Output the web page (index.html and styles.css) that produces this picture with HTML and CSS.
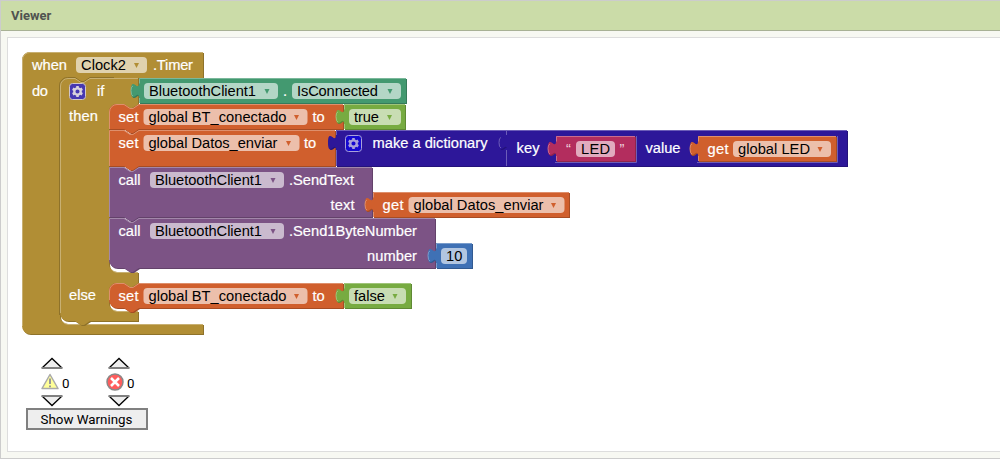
FILE: index.html
```html
<!DOCTYPE html>
<html lang="es">
<head>
<meta charset="utf-8">
<title>Viewer</title>
<link rel="stylesheet" href="styles.css">
</head>
<body>
<main class="viewer">
<header class="viewer-header">Viewer</header>
<section class="workspace">
<svg class="canvas" viewBox="8 38 992 413" width="992" height="413">
<defs>
<path id="s-when" d="M22 60a8 8 0 0 1 8-8H203V78H90l-6 4h-3l-6-4h-7a8 8 0 0 0-8 8V316a8 8 0 0 0 8 8H203V334H30a8 8 0 0 1-8-8z"/>
<path id="s-if" d="M60 86a8 8 0 0 1 8-8H75l6 4h3l6-4H138V104h1l-7 4h-3l-6-4h-6a8 8 0 0 0-8 8V264a8 8 0 0 0 8 8H138V283h1l-7 4h-3l-6-4h-6a8 8 0 0 0-8 8V303a8 8 0 0 0 8 8H138V321H90l-6 4h-3l-6-4h-7a8 8 0 0 1-8-8z"/>
<path id="s-set1" d="M109 112a8 8 0 0 1 8-8H124l6 4h3l6-4H343V129H139l-6 4h-3l-6-4H109z"/>
<path id="s-set2" d="M109 130H124l6 4h3l6-4H335V166H139l-6 4h-3l-6-4H109z"/>
<path id="s-call1" d="M109 167H124l6 4h3l6-4H372V217H139l-6 4h-3l-6-4H109z"/>
<path id="s-call2" d="M109 218H124l6 4h3l6-4H435V268H139l-6 4h-3l-6-4H117a8 8 0 0 1-8-8z"/>
<path id="s-set3" d="M109 291a8 8 0 0 1 8-8H124l6 4h3l6-4H343V308H139l-6 4h-3l-6-4H117a8 8 0 0 1-8-8z"/>
<path id="s-conn" d="M139 78H406V103H139V98c0-10-8 8-8-7.500s8 2.500 8-7.500z"/>
<path id="s-true" d="M344 104H405V129H344V124c0-10-8 8-8-7.500s8 2.500 8-7.500z"/>
<path id="s-false" d="M344 283H411V308H344V303c0-10-8 8-8-7.500s8 2.500 8-7.500z"/>
<path id="s-dict" d="M336 130H507V166H336V150c0-10-8 8-8-7.500s8 2.500 8-7.500z"/>
<path id="s-pair" d="M507 130H847V166H507V150c0-10-8 8-8-7.500s8 2.500 8-7.500z"/>
<path id="s-led" d="M556 136H635V161H556V156c0-10-8 8-8-7.500s8 2.500 8-7.500z"/>
<path id="s-getled" d="M698 136H836V161H698V156c0-10-8 8-8-7.500s8 2.500 8-7.500z"/>
<path id="s-getdatos" d="M373 192H569V217H373V212c0-10-8 8-8-7.500s8 2.500 8-7.500z"/>
<path id="s-ten" d="M436 243H472V268H436V263c0-10-8 8-8-7.500s8 2.500 8-7.500z"/>
<path id="arrow" d="M-2.500-2H2.500L0 3z"/>
<g id="gear">
<rect class="gear-box" x=".5" y=".5" width="16" height="16" rx="3"/>
<circle class="gear-ring" cx="8.500" cy="8.500" r="3.200"/>
<path class="gear-teeth" d="M8.500 3V5M8.500 12V14M3.740 5.750L5.470 6.750M11.530 10.250L13.260 11.250M3.740 11.250L5.470 10.250M11.530 6.750L13.260 5.750"/>
</g>
</defs>

<g class="block gold">
<use class="dark" href="#s-when" x="1" y="1"/><use class="main" href="#s-when"/>
<path class="light" d="M22.500 326V60a7.500 7.500 0 0 1 7.500-7.500H203M62.500 321.500a8 8 0 0 0 5.500 3H203"/>
<text x="32" y="70" textLength="35">when</text>
<rect class="field" x="76" y="57" width="71" height="16" rx="4"/><text class="value" x="81" y="70" textLength="45">Clock2</text><use class="arrow" href="#arrow" x="136.500" y="65"/>
<text x="153" y="70" textLength="40">.Timer</text>
<text x="32" y="95.500" textLength="16">do</text>
</g>

<g class="block gold">
<use class="dark" href="#s-if" x="1" y="1"/><use class="main" href="#s-if"/>
<path class="edge" d="M59.500 315V86a8 8 0 0 1 8-8.500H75l6 4h3l6-4H114"/>
<path class="light" d="M60.500 313V86a7.500 7.500 0 0 1 7.500-7.500H75l6 4h3l6-4H138M111.500 269.500a8 8 0 0 0 5.500 3H138M111.500 308.500a8 8 0 0 0 5.500 3H138"/>
<use href="#gear" x="69" y="83"/>
<text x="97" y="96">if</text><text x="69" y="121" textLength="29">then</text><text x="69" y="300" textLength="27">else</text>
</g>

<g class="block green">
<use class="dark" href="#s-conn" x="1" y="1"/><use class="main" href="#s-conn"/>
<path class="light" d="M406 78.500H139.500V83.500M133 86q-2 0-2 4.500q0 5 2 5.500M139.500 98V103"/>
<rect class="field" x="144" y="83" width="134" height="16" rx="4"/><text class="value" x="149" y="96" textLength="107">BluetoothClient1</text><use class="arrow" href="#arrow" x="267" y="91"/>
<text x="283" y="96">.</text>
<rect class="field" x="292" y="83" width="109" height="16" rx="4"/><text class="value" x="297" y="96" textLength="81">IsConnected</text><use class="arrow" href="#arrow" x="390" y="91"/>
</g>

<g class="block orange">
<use class="dark" href="#s-set1" x="1" y="1"/><use class="main" href="#s-set1"/>
<path class="light" d="M109.500 129V112a7.500 7.500 0 0 1 7.500-7.500H124l6 4h3l6-4H343"/>
<text x="118.500" y="122" textLength="20">set</text>
<rect class="field" x="143.500" y="109" width="164" height="16" rx="4"/><text class="value" x="148.500" y="122" textLength="138">global BT_conectado</text><use class="arrow" href="#arrow" x="296.500" y="117"/>
<text x="312.500" y="122">to</text>
</g>
<g class="block lime">
<use class="dark" href="#s-true" x="1" y="1"/><use class="main" href="#s-true"/>
<path class="light" d="M405 104.500H344.500V109.500M338 112q-2 0-2 4.500q0 5 2 5.500M344.500 124V129"/>
<rect class="field" x="349" y="109" width="52" height="16" rx="4"/><text class="value" x="354" y="122" textLength="25">true</text><use class="arrow" href="#arrow" x="389.500" y="117"/>
</g>

<g class="block orange">
<use class="dark" href="#s-set2" x="1" y="1"/><use class="main" href="#s-set2"/>
<path class="light" d="M109.500 166V130.500H124l6 4h3l6-4H335"/>
<text x="118.500" y="148" textLength="20">set</text>
<rect class="field" x="143.500" y="135" width="156" height="16" rx="4"/><text class="value" x="148.500" y="148" textLength="129">global Datos_enviar</text><use class="arrow" href="#arrow" x="288.500" y="143"/>
<text x="304" y="148">to</text>
</g>
<g class="block navy">
<use class="dark" href="#s-dict" x="1" y="1"/><use class="main" href="#s-dict"/>
<path class="light" d="M507 130.500H336.500V135M336.500 150V166"/>
<use class="bright" href="#gear" x="345" y="135"/>
<text x="372.500" y="148" textLength="115">make a dictionary</text>
</g>
<g class="block navy">
<use class="dark" href="#s-pair" x="1" y="1"/><use class="main" href="#s-pair"/>
<path class="light" d="M847 130.500H506.500V135M501 137.500q-2 0-2 5q0 5 2 5.500M506.500 150V166M555 162.500H636.500V136M697 162.500H837.500V136"/>
<text x="516.500" y="153" textLength="23">key</text><text x="645.500" y="153" textLength="35">value</text>
</g>
<g class="block pink">
<use class="dark" href="#s-led" x="1" y="1"/><use class="main" href="#s-led"/>
<path class="light" d="M635 136.500H556.500V141.500M550 144q-2 0-2 4.500q0 5 2 5.500M556.500 156V161"/>
<text class="quote" x="566" y="154">“</text><rect class="field" x="576" y="141" width="39" height="16" rx="4"/><text class="value" x="581" y="154" textLength="29">LED</text><text class="quote" x="619.500" y="154">”</text>
</g>
<g class="block orange">
<use class="dark" href="#s-getled" x="1" y="1"/><use class="main" href="#s-getled"/>
<path class="light" d="M836 136.500H698.500V141.500M692 144q-2 0-2 4.500q0 5 2 5.500M698.500 156V161"/>
<text x="707.500" y="154" textLength="21">get</text><rect class="field" x="733" y="141" width="98" height="16" rx="4"/><text class="value" x="738" y="154" textLength="72">global LED</text><use class="arrow" href="#arrow" x="820" y="149"/>
</g>

<g class="block purple">
<use class="dark" href="#s-call1" x="1" y="1"/><use class="main" href="#s-call1"/>
<path class="light" d="M109.500 217V167.500H124l6 4h3l6-4H372"/>
<text x="118.500" y="185" textLength="22">call</text>
<rect class="field" x="150" y="172" width="134" height="16" rx="4"/><text class="value" x="155" y="185" textLength="107">BluetoothClient1</text><use class="arrow" href="#arrow" x="273" y="180"/>
<text x="289" y="185" textLength="65">.SendText</text><text x="330.500" y="210" textLength="24">text</text>
</g>
<g class="block orange">
<use class="dark" href="#s-getdatos" x="1" y="1"/><use class="main" href="#s-getdatos"/>
<path class="light" d="M569 192.500H373.500V197.500M367 200q-2 0-2 4.500q0 5 2 5.500M373.500 212V217"/>
<text x="382.500" y="210" textLength="21">get</text><rect class="field" x="408.500" y="197" width="156" height="16" rx="4"/><text class="value" x="413.500" y="210" textLength="130">global Datos_enviar</text><use class="arrow" href="#arrow" x="553.500" y="205"/>
</g>

<g class="block purple">
<use class="dark" href="#s-call2" x="1" y="1"/><use class="main" href="#s-call2"/>
<path class="light" d="M109.500 260V218.500H124l6 4h3l6-4H435"/>
<text x="118.500" y="236" textLength="22">call</text>
<rect class="field" x="150" y="223" width="134" height="16" rx="4"/><text class="value" x="155" y="236" textLength="107">BluetoothClient1</text><use class="arrow" href="#arrow" x="273" y="231"/>
<text x="289" y="236" textLength="128">.Send1ByteNumber</text><text x="367" y="261" textLength="50">number</text>
</g>
<g class="block blue">
<use class="dark" href="#s-ten" x="1" y="1"/><use class="main" href="#s-ten"/>
<path class="light" d="M472 243.500H436.500V248.500M430 251q-2 0-2 4.500q0 5 2 5.500M436.500 263V268"/>
<rect class="field" x="441" y="248" width="26" height="16" rx="4"/><text class="value" x="446" y="261">10</text>
</g>

<g class="block orange">
<use class="dark" href="#s-set3" x="1" y="1"/><use class="main" href="#s-set3"/>
<path class="light" d="M109.500 300V291a7.500 7.500 0 0 1 7.500-7.500H124l6 4h3l6-4H343"/>
<text x="118.500" y="301" textLength="20">set</text>
<rect class="field" x="143.500" y="288" width="164" height="16" rx="4"/><text class="value" x="148.500" y="301" textLength="138">global BT_conectado</text><use class="arrow" href="#arrow" x="296.500" y="296"/>
<text x="312.500" y="301">to</text>
</g>
<g class="block lime">
<use class="dark" href="#s-false" x="1" y="1"/><use class="main" href="#s-false"/>
<path class="light" d="M411 283.500H344.500V288.500M338 291q-2 0-2 4.500q0 5 2 5.500M344.500 303V308"/>
<rect class="field" x="349" y="288" width="57" height="16" rx="4"/><text class="value" x="354" y="301" textLength="31">false</text><use class="arrow" href="#arrow" x="395" y="296"/>
</g>

<g class="indicator">
<g class="nav">
<path d="M42 368L52 358.500L62 368"/><path d="M109 368L119 358.500L129 368"/>
<path d="M42 396L52 405.500L62 396"/><path d="M109 396L119 405.500L129 396"/>
</g>
<path class="nav-base" d="M41.500 368H62.500M108.500 368H129.500M41.500 396H62.500M108.500 396H129.500"/>
<path class="warn" d="M50 374.500L58 388.500H42z"/><path class="warn-mark" d="M50 378.500V384M50 385.500V387.200"/>
<circle class="error" cx="115" cy="382" r="8"/><path class="error-mark" d="M111 378L119 386M119 378L111 386"/>
<text x="62" y="388">0</text><text x="127" y="388">0</text>
<rect class="button" x="27" y="409" width="120" height="20"/>
<text x="40.500" y="424" textLength="92">Show Warnings</text>
</g>
</svg>
</section>
</main>
</body>
</html>
```
FILE: styles.css
```css
* { box-sizing: border-box; }
body { margin: 0; overflow: hidden; background: #fff; }
.viewer {
  display: flex;
  flex-direction: column;
  height: 459px;
  border: 1px solid #ccc;
  border-right: 0;
  background: #f7f8f2;
}
.viewer-header {
  height: 30px;
  padding-left: 10px;
  border-bottom: 1px solid #a8b195;
  background: #cbdca8;
  color: #505350;
  font: bold 13px/29px Roboto, sans-serif;
}
.workspace {
  flex: 1;
  margin: 6px 0 6px 6px;
  border: 1px solid #ddd;
  border-right: 0;
  background: #fff;
}
.canvas { display: block; }
.block text { fill: #fff; font: 14.670px "Liberation Sans", Arial, sans-serif; stroke: #fff; stroke-width: .2px; }
.block .value { fill: #000; stroke: none; }
.block .quote { stroke: none; fill: #f0d5df; }
.main, .arrow { fill: var(--main); }
.dark { fill: var(--dark); }
.light { fill: none; stroke: var(--light); }
.edge { fill: none; stroke: var(--dark); }
.field { fill: #fff; fill-opacity: .6; }
.gold { --main: #b18e35; --dark: #8e722a; --light: #c8b072; }
.green { --main: #439970; --dark: #367a5a; --light: #7bb89b; }
.orange { --main: #d05f2d; --dark: #a64c24; --light: #de8f6c; }
.lime { --main: #77ab41; --dark: #5f8934; --light: #a0c47a; }
.navy { --main: #2d1799; --dark: #24127a; --light: #6c5db8; }
.pink { --main: #b32d5e; --dark: #8f244b; --light: #ca6c8e; }
.purple { --main: #7c5385; --dark: #63426a; --light: #a387aa; }
.blue { --main: #3f71b5; --dark: #325a91; --light: #799ccb; }
.bright { --gear: #1508d0; --gear-line: #a9a2da; }
.gear-box { fill: var(--gear, #4638b1); stroke: var(--gear-line, #d0c5c8); }
.gear-ring { fill: none; stroke: var(--gear-line, #d8d2dc); stroke-width: 2.300; }
.gear-teeth { stroke: var(--gear-line, #d8d2dc); stroke-width: 2.600; }
.nav path { fill: #eee; stroke: #000; stroke-width: 1.300; }
.nav-base { stroke: #808080; stroke-width: 2; }
.warn { fill: #ff9; stroke: #aaa; stroke-linejoin: round; stroke-width: 1.500; }
.warn-mark { stroke: #999; stroke-width: 2; }
.error { fill: #ff5d5d; stroke: #888; stroke-width: 1.500; }
.error-mark { stroke: #fff; stroke-width: 2.500; }
.indicator text { fill: #000; font: 13.330px Roboto, sans-serif; }
.button { fill: #eee; stroke: #808080; stroke-width: 2; }
```
